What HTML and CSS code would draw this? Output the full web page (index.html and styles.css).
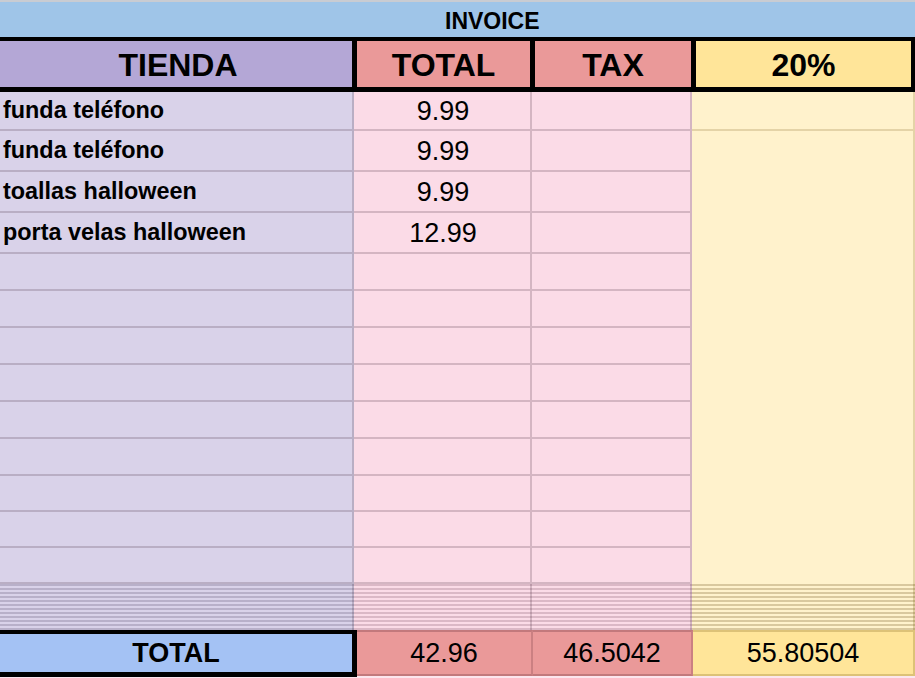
FILE: index.html
```html
<!DOCTYPE html>
<html lang="es">
<head>
<meta charset="utf-8">
<title>Invoice</title>
<link rel="stylesheet" href="styles.css">
</head>
<body>
<div class="sheet">
  <div class="topline"></div>
  <div class="title">INVOICE</div>
  <div class="head">
    <div class="h h-store">TIENDA</div>
    <div class="h h-red">TOTAL</div>
    <div class="h h-red">TAX</div>
    <div class="h h-yellow">20%</div>
  </div>
  <div class="body">
    <div class="c c-store">funda teléfono</div>
    <div class="c c-pink num">9.99</div>
    <div class="c c-pink"></div>
    <div class="c c-yellow"></div>

    <div class="c c-store">funda teléfono</div>
    <div class="c c-pink num">9.99</div>
    <div class="c c-pink"></div>
    <div class="c c-yellow merged"></div>

    <div class="c c-store">toallas halloween</div>
    <div class="c c-pink num">9.99</div>
    <div class="c c-pink"></div>

    <div class="c c-store">porta velas halloween</div>
    <div class="c c-pink num">12.99</div>
    <div class="c c-pink"></div>

    <div class="c c-store"></div><div class="c c-pink"></div><div class="c c-pink"></div>
    <div class="c c-store"></div><div class="c c-pink"></div><div class="c c-pink"></div>
    <div class="c c-store"></div><div class="c c-pink"></div><div class="c c-pink"></div>
    <div class="c c-store"></div><div class="c c-pink"></div><div class="c c-pink"></div>
    <div class="c c-store"></div><div class="c c-pink"></div><div class="c c-pink"></div>
    <div class="c c-store"></div><div class="c c-pink"></div><div class="c c-pink"></div>
    <div class="c c-store"></div><div class="c c-pink"></div><div class="c c-pink"></div>
    <div class="c c-store"></div><div class="c c-pink"></div><div class="c c-pink"></div>
    <div class="c c-store"></div><div class="c c-pink"></div><div class="c c-pink"></div>
  </div>
  <div class="stripes">
    <div class="s s-store"></div>
    <div class="s s-pink"></div>
    <div class="s s-pink"></div>
    <div class="s s-yellow"></div>
  </div>
  <div class="totals">
    <div class="t t-label">TOTAL</div>
    <div class="t t-red">42.96</div>
    <div class="t t-red">46.5042</div>
    <div class="t t-yellow">55.80504</div>
  </div>
</div>
</body>
</html>
```

FILE: styles.css
```css
html, body {
  margin: 0;
  padding: 0;
}
body {
  width: 915px;
  height: 678px;
  overflow: hidden;
  background: #fce6ee;
  font-family: "Liberation Sans", Arial, sans-serif;
  color: #000;
}
.sheet {
  display: flex;
  flex-direction: column;
  width: 915px;
}
.topline {
  height: 2px;
  background: #c9ccd2;
}
.title {
  height: 35px;
  background: #9fc5e8;
  font-weight: bold;
  font-size: 23px;
  display: flex;
  align-items: center;
  padding-left: 445px;
  box-sizing: border-box;
  padding-top: 4px;
}
.head {
  display: grid;
  grid-template-columns: 352px 173px 156px 1fr;
  grid-template-rows: 46px;
  column-gap: 5px;
  padding: 4px 4px 5px 0;
  background: #000;
}
.h {
  display: flex;
  align-items: center;
  justify-content: center;
  font-weight: bold;
  font-size: 32px;
  padding-top: 2px;
  box-sizing: border-box;
}
.h-store { background: #b4a7d6; padding-left: 4px; }
.h-red { background: #ea9999; }
.h-yellow { background: #ffe599; }

.body {
  display: grid;
  grid-template-columns: 354px 178px 160px 1fr;
  grid-template-rows: 39px 41px 41px 41px repeat(6, 37px) 36px 36px 36px;
}
.c {
  box-sizing: border-box;
  border-right: 2px solid rgba(60, 30, 50, 0.2);
  border-bottom: 2px solid rgba(60, 30, 50, 0.2);
  display: flex;
  align-items: center;
}
.c-store {
  background: #d9d2e9;
  font-weight: bold;
  font-size: 23.4px;
  padding-left: 3px;
}
.c-pink { background: #fbdbe7; }
.c-yellow {
  background: #fff2cc;
  border-right-color: rgba(120, 90, 20, 0.2);
  border-bottom-color: rgba(120, 90, 20, 0.2);
}
.merged {
  grid-row: span 12;
  border-bottom: 0;
}
.num {
  justify-content: center;
  font-size: 27px;
  padding-top: 1px;
  padding-left: 2px;
}

.stripes {
  display: grid;
  grid-template-columns: 354px 178px 160px 1fr;
  height: 46px;
}
.s {
  box-sizing: border-box;
  border-right: 2px solid rgba(60, 30, 50, 0.2);
}
.s-store {
  background: repeating-linear-gradient(to bottom, #b8b0c9 0 2px, #d9d2e9 2px 4px);
}
.s-pink {
  background: repeating-linear-gradient(to bottom, #dbb8c6 0 2px, #fbdbe7 2px 4px);
}
.s-yellow {
  background: repeating-linear-gradient(to bottom, #d9c89e 0 2px, #fff2cc 2px 4px);
  border-right-color: rgba(120, 90, 20, 0.25);
}

.totals {
  display: grid;
  grid-template-columns: 357px 176px 160px 1fr;
  height: 48px;
}
.t {
  box-sizing: border-box;
  display: flex;
  align-items: center;
  justify-content: center;
  font-size: 27px;
  border-top: 2px solid rgba(80, 30, 40, 0.25);
  border-bottom: 2px solid rgba(80, 30, 40, 0.25);
  border-right: 2px solid rgba(80, 30, 40, 0.2);
  height: 46px;
}
.t-label {
  background: #a4c2f4;
  font-weight: bold;
  border: 5px solid #000;
  border-left: 0;
  border-top-width: 4px;
  height: 47px;
}
.t-red { background: #ea9999; }
.t-yellow {
  background: #ffe599;
  border-color: rgba(120, 90, 20, 0.25);
}
```
